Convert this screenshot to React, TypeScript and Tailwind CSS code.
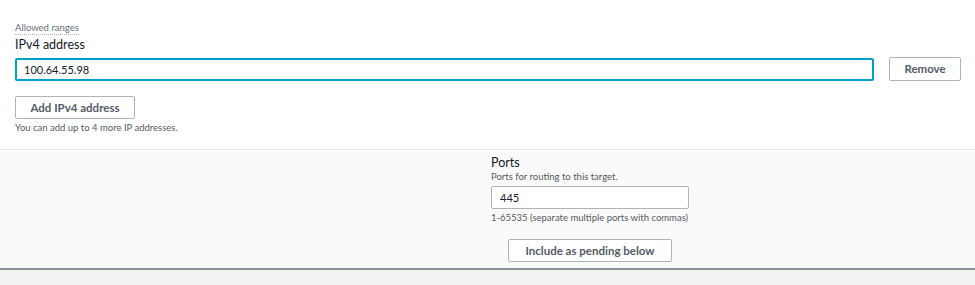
import React from 'react';

const font = { fontFamily: 'Lato, "Open Sans", sans-serif' };

const App = () => {
  return (
    <div className="w-[975px] h-[285px] bg-white text-[#16191f] overflow-hidden" style={font}>
      <div className="h-[150px] px-[15px] pt-[21px] border-b border-[#eaeded]">
        <div className="w-fit text-[9.5px] leading-[13px] text-[#687078] border-b border-dotted border-[#aab7b8]">
          Allowed ranges
        </div>
        <div className="text-[12.5px] leading-[16px] mt-[2px]">IPv4 address</div>
        <div className="flex items-center gap-[15px] mt-[4px]">
          <input
            type="text"
            defaultValue="100.64.55.98"
            className="flex-1 h-[23px] px-[7px] text-[11px] border-2 border-[#00a1c9] rounded-[2px] outline-none"
          />
          <button className="w-[72px] h-[24px] border border-[#aab7b8] rounded-[2px] text-[11.5px] font-bold text-[#545b64] mr-[-1px]">
            Remove
          </button>
        </div>
        <button className="block mt-[15px] w-[120px] h-[23px] border border-[#aab7b8] rounded-[2px] text-[11.5px] font-bold text-[#545b64]">
          Add IPv4 address
        </button>
        <div className="text-[9.5px] leading-[14px] text-[#545b64] mt-[2px]">
          You can add up to 4 more IP addresses.
        </div>
      </div>
      <div className="h-[120px] bg-[#fafafa] pl-[491px] pt-[5px] border-b-2 border-[#879596]">
        <div className="w-[198px] flex flex-col">
          <div className="text-[12.5px] leading-[16px]">Ports</div>
          <div className="text-[9.5px] leading-[12px] text-[#545b64]">Ports for routing to this target.</div>
          <input
            type="text"
            defaultValue="445"
            className="mt-[3px] h-[23px] px-[8px] text-[11px] bg-white border border-[#aab7b8] rounded-[2px] outline-none"
          />
          <div className="text-[9.5px] leading-[12px] text-[#545b64] mt-[3px] whitespace-nowrap">
            1-65535 (separate multiple ports with commas)
          </div>
          <button className="self-center mt-[15px] w-[164px] h-[23px] bg-white border border-[#aab7b8] rounded-[2px] text-[11.5px] font-bold text-[#545b64]">
            Include as pending below
          </button>
        </div>
      </div>
      <div className="h-[15px] bg-[#f2f3f3]" />
    </div>
  );
};

export default App;
